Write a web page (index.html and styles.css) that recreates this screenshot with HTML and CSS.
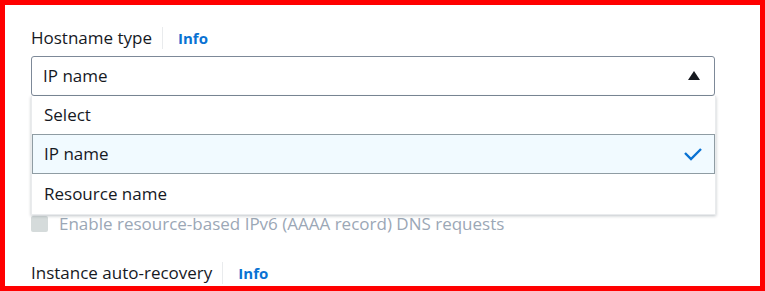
FILE: index.html
```html
<!DOCTYPE html>
<html lang="en">
<head>
<meta charset="utf-8" />
<title>Hostname type</title>
<link rel="stylesheet" href="styles.css">
</head>
<body>
<div class="frame">
	<div class="field">
		<div class="label-row">
			<span class="label">Hostname type</span>
			<span class="sep"></span>
			<a class="info" href="#">Info</a>
		</div>
		<div class="select-wrap">
			<div class="select">
				<span>IP name</span>
				<svg class="caret" width="12" height="9" viewBox="0 0 12 9"><polygon points="6,0 12,9 0,9" fill="#16191f"/></svg>
			</div>
			<ul class="dropdown">
				<li class="opt">Select</li>
				<li class="opt selected">IP name
					<svg class="check" width="20" height="14" viewBox="0 0 20 14"><polyline points="2,6 8,12 18,2" fill="none" stroke="#0972d3" stroke-width="2.4"/></svg>
				</li>
				<li class="opt last">Resource name</li>
			</ul>
		</div>
		<div class="check-row">
			<span class="box"></span>
			<span class="check-label">Enable resource-based IPv6 (AAAA record) DNS requests</span>
		</div>
	</div>
	<div class="label-row second">
		<span class="label">Instance auto-recovery</span>
		<span class="sep"></span>
		<a class="info" href="#">Info</a>
	</div>
</div>
</body>
</html>
```
FILE: styles.css
```css
body {
	margin: 0;
	font-family: "Open Sans", "Noto Sans", sans-serif;
	font-size: 17px;
	color: #16191f;
}
.frame {
	box-sizing: border-box;
	width: 765px;
	height: 291px;
	border: 5px solid #ff0000;
	padding: 21px 45px 0 26px;
	overflow: hidden;
}
.label-row {
	display: flex;
	align-items: center;
	height: 24px;
}
.label {
	line-height: 22px;
}
.sep {
	width: 1px;
	height: 22px;
	background: #e9ebed;
	margin: 0 15px 0 10px;
}
.info {
	color: #0972d3;
	font-weight: bold;
	font-size: 15px;
	text-decoration: none;
}
.select-wrap {
	position: relative;
	margin-top: 6px;
}
.select {
	box-sizing: border-box;
	height: 40px;
	border: 1px solid #7d8998;
	border-radius: 3px;
	display: flex;
	align-items: center;
	justify-content: space-between;
	padding: 0 14px 0 11px;
	line-height: 22px;
}
.caret {
	margin-bottom: 2px;
}
.dropdown {
	position: absolute;
	top: 40px;
	left: 0;
	right: -1px;
	margin: 0;
	padding: 0;
	list-style: none;
	background: #ffffff;
	border: 1px solid #e9ebed;
	border-top: none;
	box-shadow: 0 1px 3px rgba(0, 22, 40, 0.25);
	z-index: 2;
}
.opt {
	box-sizing: border-box;
	height: 38px;
	display: flex;
	align-items: center;
	justify-content: space-between;
	padding: 0 11px;
	border: 1px solid transparent;
	line-height: 22px;
}
.opt.selected {
	background: #f1faff;
	border-color: #8f9ca3;
	height: 40px;
}
.opt.last {
	height: 40px;
}
.check-row {
	display: flex;
	align-items: center;
	margin-top: 118px;
}
.box {
	width: 17px;
	height: 16px;
	background: #d5dbdb;
	border-radius: 2px;
	margin-right: 11px;
}
.check-label {
	color: #9ba7b6;
	line-height: 20px;
}
.label-row.second {
	margin-top: 27px;
}
```
